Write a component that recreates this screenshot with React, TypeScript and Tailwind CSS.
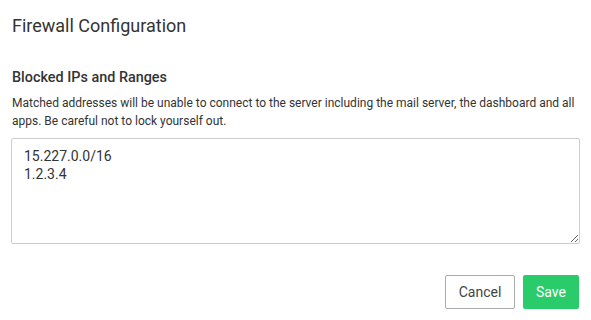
import React from 'react';

const App: React.FC = () => {
  return (
    <div className="w-[591px] h-[320px] bg-white text-[#333] font-['Roboto',sans-serif] px-[11px]">
      <h1 className="pt-[13px] pl-[1px] text-[18px] leading-[26px] font-normal text-[#333]">Firewall Configuration</h1>

      <h2 className="mt-[29px] pl-[1px] text-[14.4px] leading-[20px] font-medium text-[#333]">Blocked IPs and Ranges</h2>
      <p className="mt-[6px] pl-[1px] text-[12px] leading-[18px] text-[#333]">
        Matched addresses will be unable to connect to the server including the mail server, the dashboard and all apps. Be careful not to lock yourself out.
      </p>

      <textarea
        className="mt-[8px] block w-[569px] h-[106px] border border-[#ccc] rounded-[2px] px-[12px] pt-[8px] pb-[6px] text-[14px] leading-[18px] text-[#333] font-['Roboto',sans-serif] outline-none resize-y"
        defaultValue={'15.227.0.0/16\n1.2.3.4'}
      />

      <div className="mt-[31px] flex justify-end gap-[8px] pr-[1px]">
        <button className="w-[70px] h-[34px] border border-[#aaa] rounded-[2px] bg-white text-[14px] text-[#444]">Cancel</button>
        <button className="w-[56px] h-[34px] rounded-[2px] bg-[#2acb6b] text-[14px] text-white">Save</button>
      </div>
    </div>
  );
};

export default App;
